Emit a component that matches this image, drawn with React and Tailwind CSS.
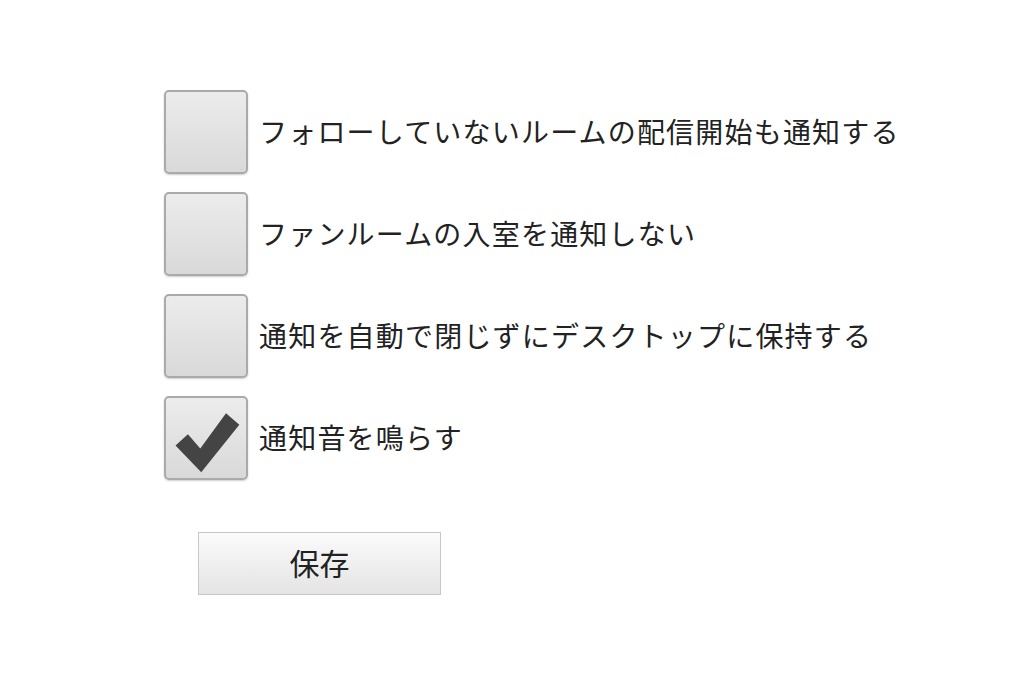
const OPTIONS = [
  { label: "フォローしていないルームの配信開始も通知する", checked: false },
  { label: "ファンルームの入室を通知しない", checked: false },
  { label: "通知を自動で閉じずにデスクトップに保持する", checked: false },
  { label: "通知音を鳴らす", checked: true },
];

const Check = () => (
  <svg viewBox="0 0 84 84" className="w-full h-full">
    <path d="M10 50 L23 38 L36 53 L63 16 L77 28 L37 78 Z" fill="#444444" />
  </svg>
);

export default function App() {
  return (
    <div
      className="w-[1024px] h-[684px] bg-white pl-[164px] pt-[90px] text-[#222]"
      style={{ fontFamily: '"Noto Sans CJK JP", "Noto Sans", sans-serif' }}
    >
      <div className="flex flex-col gap-[18px]">
        {OPTIONS.map((o) => (
          <label key={o.label} className="flex items-center gap-[11px]">
            <span className="w-[84px] h-[84px] rounded-[5px] border-2 border-[#aaaaaa] bg-gradient-to-b from-[#ececec] to-[#d9d9d9] shadow-[0_1px_2px_rgba(0,0,0,0.2)] flex items-center justify-center">
              {o.checked && <Check />}
            </span>
            <span className="text-[28px] leading-none tracking-[1.2px] -mt-[3px]">{o.label}</span>
          </label>
        ))}
      </div>
      <button className="ml-[34px] mt-[52px] w-[243px] h-[63px] border border-[#c8c8c8] bg-gradient-to-b from-[#fbfbfb] to-[#e4e4e4] text-[30px] leading-none text-[#222] pb-[4px]">
        保存
      </button>
    </div>
  );
}
